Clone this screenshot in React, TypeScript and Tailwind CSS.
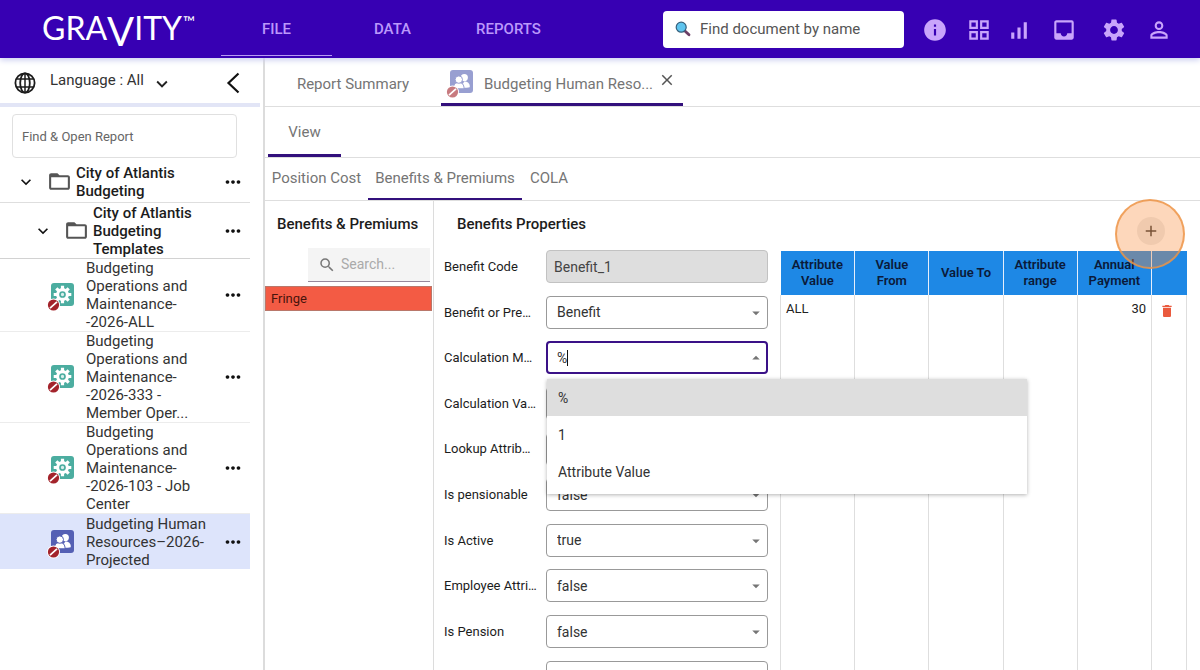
import { useState } from "react";
import type { ReactNode } from "react";
import {
  MdInfo,
  MdOutlineGridView,
  MdSignalCellularAlt,
  MdInbox,
  MdSettings,
  MdPersonOutline,
  MdExpandMore,
  MdFolderOpen,
  MdMoreHoriz,
  MdSearch,
  MdArrowDropDown,
  MdArrowDropUp,
  MdDelete,
  MdAdd,
  MdClose,
} from "react-icons/md";

function GlobeIcon() {
  return (
    <svg viewBox="0 0 22 22" className="size-[22px] shrink-0" fill="none" stroke="#1c1c1c" strokeWidth="1.8" aria-hidden="true">
      <circle cx="11" cy="11" r="9.6" />
      <ellipse cx="11" cy="11" rx="4.8" ry="9.6" />
      <path d="M11 1.4v19.2M2.4 7h17.2M2.4 15h17.2" strokeWidth="1.5" />
    </svg>
  );
}

function MagnifierIcon() {
  return (
    <svg viewBox="0 0 16 16" className="size-4 shrink-0" aria-hidden="true">
      <path d="M9.4 9.4l4.6 4.4" stroke="#6d3f66" strokeWidth="2.8" strokeLinecap="round" />
      <circle cx="6.2" cy="6.2" r="5" fill="#5ec4ee" stroke="#35607d" strokeWidth="1.2" />
    </svg>
  );
}

function ReportIcon({ kind, faded = false }: { kind: "gear" | "people"; faded?: boolean }) {
  return (
    <svg viewBox="0 0 28 30" className={faded ? "h-[30px] w-7 shrink-0 opacity-60" : "mt-1 h-[30px] w-7 shrink-0"} aria-hidden="true">
      <rect x="4" y="1" width="23" height="23" rx="3" fill={kind === "gear" ? "#4cada0" : "#5560b4"} />
      {kind === "gear" ? (
        <g>
          <circle cx="15.5" cy="12.5" r="6.4" fill="#fff" />
          <path
            d="M15.500 3.700v17.600M6.700 12.500h17.600M9.300 6.300l12.400 12.400M9.300 18.700l12.400-12.400"
            stroke="#fff"
            strokeWidth="3.2"
          />
          <circle cx="15.5" cy="12.5" r="2.5" fill="#d9efec" stroke="#4cada0" strokeWidth="1.7" />
        </g>
      ) : (
        <g fill="#fff">
          <circle cx="18.3" cy="8.600" r="3.600" />
          <path d="M14.500 18.500c6 .6 9.300-.3 9.300-.3.2-4-2.300-5.700-5.500-5.700z" />
          <g stroke="#5560b4" strokeWidth="1">
            <path d="M7.500 19.800c-.2-4.500 2-6.200 5.200-6.200s5.500 1.700 5.300 6.200z" />
            <circle cx="12.800" cy="10.600" r="3.700" />
          </g>
        </g>
      )}
      <circle cx="6.500" cy="23" r="6.500" fill="#fff" />
      <circle cx="6.500" cy="23" r="5.600" fill="#a3232b" />
      <path d="M3 26.200l7-6.400" stroke="#fff" strokeWidth="1.700" />
    </svg>
  );
}

const NAV = ["FILE", "DATA", "REPORTS"];

function Header() {
  return (
    <header className="z-10 flex h-[58px] shrink-0 items-center bg-[#3700b3] shadow-[0_2px_6px_#c9cdf0]">
      <a href="#home" aria-label="GRAVITY™" className="ml-[42px] flex w-[179px] shrink-0 items-start gap-px font-['Lato',sans-serif] text-[32px] leading-[40px] text-white">
        <span>
          GRA<span className="align-[-6px] text-[40px] leading-none">V</span>ITY
        </span>
        <span className="text-[16px] leading-7">™</span>
      </a>
      <nav className="flex h-full shrink-0 items-stretch gap-[5px]">
        {NAV.map((item, i) => (
          <a
            key={item}
            href={"#" + item.toLowerCase()}
            className={
              i === 0
                ? "mb-[2px] flex w-[111px] items-center justify-center border-b border-[#b79bf2] pt-[3px] text-[15px] font-medium text-[#bb98fb]"
                : "mb-[2px] flex w-[111px] items-center justify-center border-b border-transparent pt-[3px] text-[15px] font-medium text-[#bb98fb]"
            }
          >
            {item}
          </a>
        ))}
      </nav>
      <label className="ml-auto flex h-[37px] w-[241px] shrink-0 items-center gap-[9px] rounded-[4px] bg-white pl-3">
        <MagnifierIcon />
        <input aria-label="Find document by name" placeholder="Find document by name" className="min-w-0 flex-1 text-[15px] text-[#444] outline-none placeholder:text-[#555]" />
      </label>
      <div className="mt-[2px] mr-[28px] ml-[18px] flex shrink-0 items-center text-[#c9a5fb]">
        <button aria-label="Information" className="mr-[18px]"><MdInfo size={26} /></button>
        <button aria-label="Dashboard" className="mr-[14px]"><MdOutlineGridView size={26} /></button>
        <button aria-label="Statistics" className="mr-[20px]"><MdSignalCellularAlt size={25} /></button>
        <button aria-label="Inbox" className="mr-[24px]"><MdInbox size={26} /></button>
        <button aria-label="Settings" className="mr-[19px]"><MdSettings size={26} /></button>
        <button aria-label="Account"><MdPersonOutline size={26} /></button>
      </div>
    </header>
  );
}

function MoreButton() {
  return (
    <button aria-label="More actions" className="ml-auto shrink-0 pr-[6px] text-[#111]">
      <MdMoreHoriz size={22} />
    </button>
  );
}

function FolderRow({ nested = false, children }: { nested?: boolean; children: ReactNode }) {
  return (
    <li className={nested ? "flex min-h-[56px] items-center border-b border-[#d2d2d2] pl-[33px]" : "flex min-h-[40px] items-center border-b border-[#dedede] pb-[2px] pl-4"}>
      <button aria-label="Collapse folder" className="shrink-0 text-[#111]"><MdExpandMore size={20} /></button>
      <MdFolderOpen size={25} className="ml-[11px] shrink-0 text-[#555]" />
      <span className="ml-1 w-[120px] text-[15px] leading-[18px] font-medium text-[#1c1c1c]">{children}</span>
      <MoreButton />
    </li>
  );
}

function ReportRow({ kind, selected = false, children }: { kind: "gear" | "people"; selected?: boolean; children: ReactNode }) {
  return (
    <li className={selected ? "flex min-h-[55px] items-center bg-[#dde4fb] pl-[47px]" : "flex items-center border-b border-[#ececec] pl-[47px]"}>
      <ReportIcon kind={kind} />
      <a href="#report" className="ml-[11px] w-[130px] text-[15px] leading-[18px] text-[#333]">{children}</a>
      <MoreButton />
    </li>
  );
}

function Sidebar() {
  return (
    <aside className="w-[260px] shrink-0">
      <div className="flex h-[49px] items-center border-b-[4px] border-[#e2e5f6] pt-1 pl-[14px]">
        <GlobeIcon />
        <button className="mb-1 ml-[14px] flex items-center gap-[7px] text-[15px] text-[#333]">
          Language : All
          <MdExpandMore size={22} className="mt-[6px] text-[#222]" />
        </button>
        <button aria-label="Collapse sidebar" className="mr-[20px] ml-auto">
          <svg viewBox="0 0 14 22" className="h-[22px] w-[14px]" fill="none" stroke="#111" strokeWidth="2.2" aria-hidden="true">
            <path d="M12.500 1.500L2.500 11l10 9.500" />
          </svg>
        </button>
      </div>
      <input
        aria-label="Find & Open Report"
        placeholder="Find & Open Report"
        className="mt-[7px] ml-3 h-[44px] w-[225px] rounded-[4px] border border-[#e0e0e0] px-[9px] text-[13px] outline-none placeholder:text-[#666]"
      />
      <ul className="mt-[5px] w-[250px]">
        <FolderRow>City of Atlantis Budgeting</FolderRow>
        <FolderRow nested>City of Atlantis Budgeting Templates</FolderRow>
        <ReportRow kind="gear">Budgeting<br />Operations and<br />Maintenance-<br />-2026-ALL</ReportRow>
        <ReportRow kind="gear">Budgeting<br />Operations and<br />Maintenance-<br />-2026-333 -<br />Member Oper...</ReportRow>
        <ReportRow kind="gear">Budgeting<br />Operations and<br />Maintenance-<br />-2026-103 - Job<br />Center</ReportRow>
        <ReportRow kind="people" selected>Budgeting Human<br />Resources–2026-<br />Projected</ReportRow>
      </ul>
    </aside>
  );
}

function Tabs() {
  return (
    <>
      <div className="flex h-[49px] items-stretch border-b border-[#dedede] text-[15px] text-[#757575]">
        <button className="w-[176px] shrink-0 pt-1">Report Summary</button>
        <div className="flex w-[242px] shrink-0 items-center border-b-[3px] border-[#33107c] pt-[7px]">
          <button className="flex items-center gap-[10px] pl-[5px] whitespace-nowrap">
            <ReportIcon kind="people" faded />
            Budgeting Human Reso...
          </button>
          <button aria-label="Close tab" className="mb-[8px] ml-[5px] text-[#555]"><MdClose size={18} /></button>
        </div>
      </div>
      <div className="flex h-[51px] items-stretch border-b border-[#dedede] pl-[3px] text-[15px] text-[#757575]">
        <button className="w-[73px] border-b-[3px] border-[#33107c] pt-[3px]">View</button>
      </div>
      <div className="flex h-[43px] items-stretch border-b border-[#dedede] text-[15px] text-[#757575]">
        <button className="w-[103px] shrink-0 border-b-2 border-transparent">Position Cost</button>
        <button className="w-[154px] shrink-0 border-b-2 border-[#33107c]">Benefits &amp; Premiums</button>
        <button className="w-[54px] shrink-0 border-b-2 border-transparent">COLA</button>
      </div>
    </>
  );
}

function BenefitList() {
  return (
    <section className="w-[169px] shrink-0 border-r border-[#dcdcdc]">
      <h2 className="mt-[13px] pl-3 text-[15px] leading-5 font-medium text-[#1c1c1c]">Benefits &amp; Premiums</h2>
      <label className="mt-[14px] mr-[3px] ml-auto flex h-[34px] w-[122px] items-center gap-1 border-b border-[#96899c] bg-[#f4f4f4] pl-[10px]">
        <MdSearch size={18} className="shrink-0 text-[#777]" />
        <input aria-label="Search" placeholder="Search..." className="min-w-0 flex-1 pl-[1px] text-[14px] outline-none placeholder:text-[#aaa]" />
      </label>
      <button className="mt-1 block h-[25px] w-[167px] border border-[#b9776a] bg-[#f35b44] pl-[5px] text-left text-[13px] text-[#48140c]">Fringe</button>
    </section>
  );
}

type Field = { id: string; label: string; value: string };

const FIELDS: Field[] = [
  { id: "value", label: "Calculation Va…", value: "" },
  { id: "lookup", label: "Lookup Attrib…", value: "" },
  { id: "pensionable", label: "Is pensionable", value: "false" },
  { id: "active", label: "Is Active", value: "true" },
  { id: "employee", label: "Employee Attri…", value: "false" },
  { id: "pension", label: "Is Pension", value: "false" },
  { id: "next", label: "", value: "" },
];

function FieldRow({ id, label, children }: { id: string; label: string; children: ReactNode }) {
  return (
    <div className="flex items-center">
      <label htmlFor={id} className="w-[102px] shrink-0 text-[13px] whitespace-nowrap text-[#1c1c1c]">{label}</label>
      <div className="relative h-[33px] w-[222px]">{children}</div>
    </div>
  );
}

function SelectField({ id, label, value }: Field) {
  return (
    <FieldRow id={id} label={label}>
      <select id={id} defaultValue={value} aria-label={label || "Additional property"} className="h-full w-full appearance-none rounded-[4px] border border-[#999] bg-white pt-px pl-[10px] text-[14px] text-[#333]">
        <option>{value}</option>
      </select>
      <MdArrowDropDown size={18} className="pointer-events-none absolute top-2 right-[3px] text-[#757575]" />
    </FieldRow>
  );
}

function CalculationField() {
  const [value, setValue] = useState("%");
  return (
    <FieldRow id="method" label="Calculation M…">
      <input
        id="method"
        role="combobox"
        aria-expanded="true"
        aria-controls="method-options"
        value={value}
        onChange={(e) => setValue(e.target.value)}
        className="h-full w-full rounded-[4px] border-2 border-[#3a1187] bg-white pt-px pl-[9px] text-[14px] text-[#333] outline-none"
      />
      <span className="absolute top-[9px] left-[21px] h-4 w-px bg-[#111]" />
      <MdArrowDropUp size={18} className="pointer-events-none absolute top-2 right-[3px] text-[#757575]" />
      <ul id="method-options" role="listbox" className="absolute top-[38px] left-px z-10 w-[480px] bg-white pb-1 text-[14px] text-[#333] shadow-[0_1px_4px_rgba(0,0,0,0.3)]">
        {["%", "1", "Attribute Value"].map((o) => (
          <li key={o} role="option" aria-selected={o === value} className="flex h-[37px] items-center pt-px pl-[11px] aria-selected:bg-[#dedede]">{o}</li>
        ))}
      </ul>
    </FieldRow>
  );
}

const COLUMNS = ["Attribute Value", "Value From", "Value To", "Attribute range", "Annual Payment"];

function AttributeTable() {
  return (
    <table className="min-h-0 w-full flex-1 table-fixed border-collapse text-[13px]">
      <colgroup>
        <col /><col /><col /><col /><col />
        <col className="w-[35px]" />
      </colgroup>
      <thead>
        <tr className="h-[44px] bg-[#1e88e5] text-[#0b1a3a]">
          {COLUMNS.map((c) => (
            <th key={c} className="border-r border-[#e6eefb] px-2 leading-4 font-semibold">{c}</th>
          ))}
          <th aria-label="Actions" />
        </tr>
      </thead>
      <tbody>
        <tr className="align-top text-[#222]">
          <td className="border-x border-[#dedede] px-[5px] pt-1">ALL</td>
          <td className="border-r border-[#dedede]" />
          <td className="border-r border-[#dedede]" />
          <td className="border-r border-[#dedede]" />
          <td className="border-r border-[#dedede] px-[5px] pt-1 text-right">30</td>
          <td className="border-r border-[#dedede] pt-2 pr-1 text-center">
            <button aria-label="Delete row" className="align-top text-[#ea5a3e]"><MdDelete size={16} /></button>
          </td>
        </tr>
      </tbody>
    </table>
  );
}

function Properties() {
  return (
    <section className="flex min-w-0 flex-1 flex-col">
      <h2 className="mt-[13px] pl-[23px] text-[15px] leading-5 font-medium text-[#1c1c1c]">Benefits Properties</h2>
      <div className="flex min-h-0 flex-1 items-stretch">
        <form className="mt-[10px] ml-[10px] grid h-[456px] shrink-0 auto-rows-fr">
          <FieldRow id="code" label="Benefit Code">
            <input id="code" readOnly value="Benefit_1" className="h-full w-full rounded-[4px] border border-[#c2c2c2] bg-[#dedede] pl-[7px] text-[14px] text-[#444] outline-none" />
          </FieldRow>
          <SelectField id="type" label="Benefit or Pre…" value="Benefit" />
          <CalculationField />
          {FIELDS.map((f) => (
            <SelectField key={f.id} {...f} />
          ))}
        </form>
        <div className="relative mt-[17px] mr-[13px] ml-3 flex min-w-0 flex-1 flex-col">
          <AttributeTable />
          <button aria-label="Add row" className="absolute -top-[34px] right-[22px] flex size-7 items-center justify-center rounded-full bg-[#ececec] text-[#333]">
            <MdAdd size={18} />
          </button>
          <span className="pointer-events-none absolute -top-[52px] right-[2px] size-[70px] rounded-full border-2 border-[#ee9546]/80 bg-[#f98b3c]/35" />
        </div>
      </div>
    </section>
  );
}

export default function App() {
  return (
    <div className="flex h-screen flex-col overflow-hidden bg-white font-['Roboto',sans-serif]">
      <Header />
      <div className="flex min-h-0 flex-1">
        <Sidebar />
        <main className="ml-[3px] flex min-w-0 flex-1 flex-col border-l-2 border-[#dcdcdc]">
          <Tabs />
          <div className="flex min-h-0 flex-1">
            <BenefitList />
            <Properties />
          </div>
        </main>
      </div>
    </div>
  );
}
